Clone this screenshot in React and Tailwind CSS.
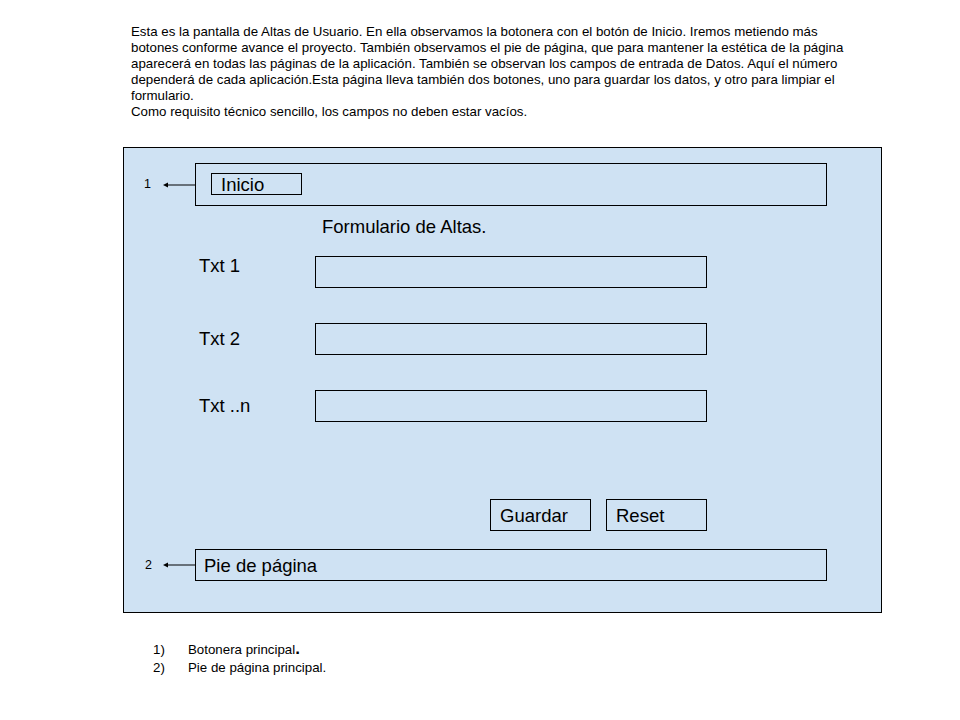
import React from 'react';

const lines = [
  'Esta es la pantalla de Altas de Usuario. En ella observamos la botonera con el botón de Inicio. Iremos metiendo más',
  'botones conforme avance el proyecto. También observamos el pie de página, que para mantener la estética de la página',
  'aparecerá en todas las páginas de la aplicación. También se observan los campos de entrada de Datos. Aquí el número',
  'dependerá de cada aplicación.Esta página lleva también dos botones, uno para guardar los datos, y otro para limpiar el',
  'formulario.',
  'Como requisito técnico sencillo, los campos no deben estar vacíos.',
];

function Arrow() {
  return (
    <svg width="32" height="8" viewBox="0 0 32 8" className="ml-auto block">
      <line x1="4" y1="4" x2="32" y2="4" stroke="#000" strokeWidth="1" />
      <polygon points="0,4 5,1.5 5,6.5" fill="#000" />
    </svg>
  );
}

function Field({ label, raise }) {
  return (
    <div className="flex items-center">
      <span className={`ml-[75px] w-[116px] text-[18.5px] leading-[22px] ${raise ? '-mt-[12px]' : ''}`}>{label}</span>
      <div className="w-[392px] h-[32px] border border-black" />
    </div>
  );
}

function App() {
  return (
    <div
      className="w-[960px] h-[720px] bg-white text-black overflow-hidden"
      style={{ fontFamily: '"Liberation Sans", Arial, sans-serif' }}
    >
      <div className="pt-[24px] pl-[131px] text-[13.3px] leading-[16px]">
        {lines.map((l, i) => (
          <div key={i} className="whitespace-nowrap">{l}</div>
        ))}
      </div>

      <div className="ml-[123px] mt-[27px] w-[759px] h-[466px] border border-black bg-[#cfe2f3]">
        {/* botonera */}
        <div className="flex items-center mt-[15px]">
          <div className="w-[71px] flex items-center">
            <span className="ml-[20px] text-[12.5px]">1</span>
            <Arrow />
          </div>
          <div className="w-[632px] h-[43px] border border-black pl-[15px] pt-[9px]">
            <div className="w-[91px] h-[22px] border border-black pl-[9px] pt-[1px] text-[18.5px] leading-[20px]">Inicio</div>
          </div>
        </div>

        <div className="ml-[198px] mt-[10px] text-[18.5px] leading-[22px]">Formulario de Altas.</div>

        <div className="mt-[18px] flex flex-col gap-[35px]">
          <Field label="Txt 1" raise />
          <Field label="Txt 2" />
          <Field label="Txt ..n" />
        </div>

        <div className="mt-[77px] ml-[366px] flex gap-[15px]">
          <div className="w-[101px] h-[32px] border border-black pl-[9px] pt-[1px] text-[18.5px] leading-[30px]">Guardar</div>
          <div className="w-[101px] h-[32px] border border-black pl-[9px] pt-[1px] text-[18.5px] leading-[30px]">Reset</div>
        </div>

        {/* pie */}
        <div className="flex items-center mt-[18px]">
          <div className="w-[71px] flex items-center">
            <span className="ml-[21px] text-[12.5px]">2</span>
            <Arrow />
          </div>
          <div className="w-[632px] h-[32px] border border-black pl-[8px] pt-[1px] text-[18.5px] leading-[30px]">Pie de página</div>
        </div>
      </div>

      <div className="mt-[28px] text-[13.3px] leading-[18px]">
        <div className="flex">
          <span className="ml-[153px] w-[35px]">1)</span>
          <span>Botonera principal<span className="text-[17px] font-bold leading-[10px]">.</span></span>
        </div>
        <div className="flex">
          <span className="ml-[153px] w-[35px]">2)</span>
          <span>Pie de página principal.</span>
        </div>
      </div>
    </div>
  );
}

export default App;
